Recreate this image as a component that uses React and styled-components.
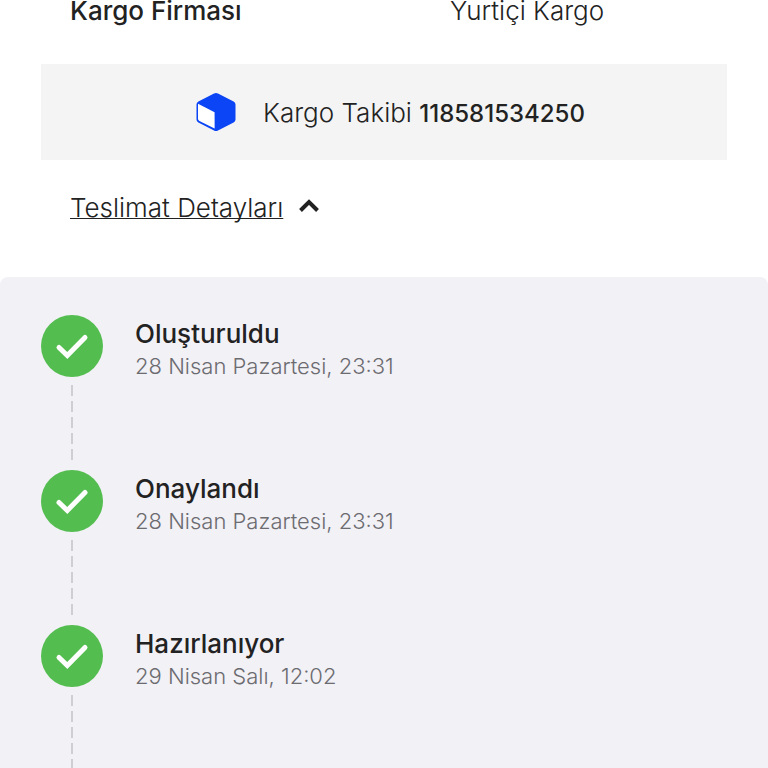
import { useState } from 'react';
import styled, { createGlobalStyle } from 'styled-components';

const GlobalStyle = createGlobalStyle`
* {
  box-sizing: border-box;
}
body {
  margin: 0;
  background-color: #ffffff;
  color: #222222;
  font-family: 'Inter', 'Liberation Sans', sans-serif;
}
`

const Page = styled.main`
display: flex;
flex-direction: column;
min-height: 100vh;
`

const InfoRow = styled.dl`
display: grid;
grid-template-columns: 380px 1fr;
margin: 0;
padding: 0 70px;
font-size: 26px;
line-height: 22px;
`

const InfoLabel = styled.dt`
font-weight: 500;
`

const InfoValue = styled.dd`
margin: 0;
font-weight: 300;
`

const TrackingBox = styled.div`
display: flex;
align-items: center;
justify-content: center;
gap: 26px;
height: 96px;
margin: 42px 41px 0;
padding-left: 12px;
background-color: #f4f4f4;

svg {
  flex: none;
}
`

const TrackingText = styled.p`
margin: 0;
padding-top: 2px;
font-size: 26px;
font-weight: 300;
line-height: 32px;
`

const TrackingNumber = styled.strong`
font-size: 24px;
font-weight: 500;
`

const DetailsToggle = styled.button`
display: flex;
align-items: flex-start;
align-self: flex-start;
gap: 16px;
margin: 32px 70px 53px;
padding: 0;
border: 0;
background: none;
color: inherit;
font-family: inherit;
font-size: 26px;
font-weight: 300;
line-height: 32px;
cursor: pointer;

svg {
  margin-top: 7px;
  transform: ${props => props.$open ? 'none' : 'rotate(180deg)'};
}
`

const ToggleText = styled.span`
text-decoration: underline;
text-decoration-thickness: 1px;
text-underline-offset: 1px;
text-decoration-skip-ink: none;
`

const Timeline = styled.ol`
flex: 1;
margin: 0;
padding: 38px 41px 0;
border-radius: 8px 8px 0 0;
background-color: #f2f1f6;
list-style: none;
`

const Step = styled.li`
display: flex;
gap: 32px;
`

const Marker = styled.div`
display: flex;
flex-direction: column;
align-items: center;
`

const Circle = styled.div`
width: 62px;
height: 62px;
border-radius: 50%;
background-color: #54bd50;
`

const DashedLine = styled.div`
width: 2px;
height: 75px;
margin: 8px 0 10px;
background: repeating-linear-gradient(#cfced2 0 11px, transparent 11px 16px);
`

const LastLine = styled(DashedLine)`
margin-bottom: 0;
`

const StepTitle = styled.h2`
margin: 3px 0 0;
font-size: 26px;
font-weight: 500;
line-height: 32px;
`

const StepDate = styled.p`
margin: 0;
color: #6c6b70;
font-size: 22px;
font-weight: 300;
line-height: 32px;
`

const steps = [
    { title: 'Oluşturuldu', date: '28 Nisan Pazartesi, 23:31' },
    { title: 'Onaylandı', date: '28 Nisan Pazartesi, 23:31' },
    { title: 'Hazırlanıyor', date: '29 Nisan Salı, 12:02' },
]

const BoxIcon = () => (
    <svg width="42" height="40" viewBox="0 0 42 40" aria-hidden="true">
        <path d="M19 1.6 Q21 .6 23 1.6 L38.6 9.4 Q40.5 10.4 40.5 12.5 V27.5 Q40.5 29.6 38.6 30.6 L23 38.4 Q21 39.4 19 38.4 L3.4 30.6 Q1.5 29.6 1.5 27.5 V12.5 Q1.5 10.4 3.4 9.4 Z" fill="#0b45f5" />
        <path d="M3 11.8 L19.6 20.2 V36.6 L4.4 29 Q3 28.3 3 26.8 Z" fill="#ffffff" />
    </svg>
)

const CheckIcon = () => (
    <svg width="62" height="62" viewBox="0 0 62 62" aria-hidden="true">
        <path d="M18 32.5 L26.3 40.5 L44 22.5" fill="none" stroke="#ffffff" strokeWidth="5" strokeLinecap="round" />
    </svg>
)

const ArrowIcon = () => (
    <svg width="20" height="14" viewBox="0 0 20 14" aria-hidden="true">
        <path d="M1.5 11.5 L10 3 L18.5 11.5" fill="none" stroke="#222222" strokeWidth="4" />
    </svg>
)

const App = () => {
    const [open, setOpen] = useState(true)

    return (
        <>
            <GlobalStyle />
            <Page>
                <InfoRow>
                    <InfoLabel>Kargo Firması</InfoLabel>
                    <InfoValue>Yurtiçi Kargo</InfoValue>
                </InfoRow>
                <TrackingBox>
                    <BoxIcon />
                    <TrackingText>Kargo Takibi <TrackingNumber>118581534250</TrackingNumber></TrackingText>
                </TrackingBox>
                <DetailsToggle type="button" $open={open} aria-expanded={open} onClick={() => setOpen(!open)}>
                    <ToggleText>Teslimat Detayları</ToggleText>
                    <ArrowIcon />
                </DetailsToggle>
                {open && (
                    <Timeline>
                        {steps.map((step, index) => (
                            <Step key={step.title}>
                                <Marker>
                                    <Circle><CheckIcon /></Circle>
                                    {index < steps.length - 1 ? <DashedLine /> : <LastLine />}
                                </Marker>
                                <div>
                                    <StepTitle>{step.title}</StepTitle>
                                    <StepDate>{step.date}</StepDate>
                                </div>
                            </Step>
                        ))}
                    </Timeline>
                )}
            </Page>
        </>
    )
}

export default App;
